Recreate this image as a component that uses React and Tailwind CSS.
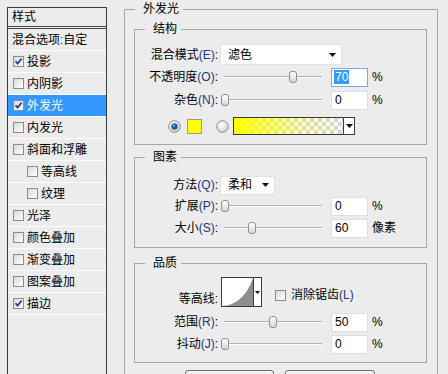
import React from "react";

const KEY = "text-[#24357f]";

const Check = ({ checked }) => (
  <span className="w-[11px] h-[11px] shrink-0 border border-[#8c8c8c] bg-[linear-gradient(135deg,#d9d9d9,#ffffff)] flex items-center justify-center">
    {checked && (
      <svg width="9" height="9" viewBox="0 0 9 9">
        <path d="M1.5 4.2 L3.6 6.6 L7.6 1.6" stroke="#2b3f9e" strokeWidth="1.7" fill="none" />
      </svg>
    )}
  </span>
);

const Radio = ({ on }) => (
  <svg width="13" height="13" viewBox="0 0 13 13" className="shrink-0">
    <defs>
      <radialGradient id={on ? "rOn" : "rOff"} cx="40%" cy="35%" r="70%">
        <stop offset="0%" stopColor="#ffffff" />
        <stop offset="100%" stopColor="#cfcfcf" />
      </radialGradient>
    </defs>
    <circle cx="6.5" cy="6.5" r="5.8" fill={`url(#${on ? "rOn" : "rOff"})`} stroke="#8a8a8a" />
    {on && <circle cx="6.5" cy="6.5" r="3.2" fill="#1f5d9c" />}
    {on && <circle cx="5.8" cy="5.6" r="1.1" fill="#8fc4ef" />}
  </svg>
);

const Arrow = () => (
  <svg width="7" height="4" viewBox="0 0 7 4">
    <path d="M0 0 H7 L3.5 4 Z" fill="#111" />
  </svg>
);

const Slider = ({ pos }) => (
  <div className="relative w-[102px] h-[12px] shrink-0">
    <div className="absolute left-[4px] right-0 top-[5px] h-[1px] bg-[#b4b4b4]" />
    <div className="absolute left-[4px] right-0 top-[6px] h-[1px] bg-white" />
    <div
      className="absolute top-0 w-[8px] h-[12px] rounded-[3px] border border-[#8f8f8f] bg-[linear-gradient(#ffffff,#d6d6d6)]"
      style={{ left: pos }}
    />
  </div>
);

const Label = ({ text, k, className = "" }) => (
  <div className={`w-[83px] shrink-0 text-right whitespace-nowrap ${className}`}>
    {text}
    <span className={KEY}>({k})</span>:
  </div>
);

const NumBox = ({ value, focus }) => (
  <div
    className={`ml-[9px] w-[37px] h-[19px] bg-white border flex items-center pl-[2px] ${
      focus ? "border-[#86a8d6]" : "border-[#dedede]"
    }`}
  >
    {focus ? (
      <span className="bg-[#3399ff] text-white leading-[14px] px-[1px]">{value}</span>
    ) : (
      <span className="px-[1px]">{value}</span>
    )}
  </div>
);

const SliderRow = ({ text, k, pos, value, unit = "%", focus, h = "h-[22px]" }) => (
  <div className={`flex items-center ${h}`}>
    <Label text={text} k={k} />
    <div className="ml-[2px] flex items-center">
      <Slider pos={pos} />
      <NumBox value={value} focus={focus} />
      <span className="ml-[4px]">{unit}</span>
    </div>
  </div>
);

const Group = ({ title, indent, children, className = "" }) => (
  <fieldset className={`border border-[#a6a6a6] ${className}`}>
    <legend className={`leading-[16px] pl-[8px] pr-[4px] ${indent}`}>{title}</legend>
    {children}
  </fieldset>
);

const styles = [
  { t: "投影", c: true },
  { t: "内阴影" },
  { t: "外发光", c: true, sel: true },
  { t: "内发光" },
  { t: "斜面和浮雕" },
  { t: "等高线", sub: true },
  { t: "纹理", sub: true },
  { t: "光泽" },
  { t: "颜色叠加" },
  { t: "渐变叠加" },
  { t: "图案叠加" },
  { t: "描边", c: true },
];

export default function App() {
  return (
    <div className="w-[448px] h-[374px] overflow-hidden bg-[#ececec] flex items-start text-[12px] text-black font-['Liberation_Sans','Noto_Sans_CJK_SC',sans-serif]">
      {/* left list */}
      <div className="ml-[7px] mt-[7px] w-[100px] h-[400px] shrink-0 border border-[#3c3c3c] flex flex-col">
        <div className="h-[21px] border-b-[3px] border-double border-[#4a4a4a] flex items-center pl-[4px] leading-none">
          样式
        </div>
        <div className="h-[22px] border-b border-white flex items-center pl-[4px] whitespace-nowrap">
          混合选项<span className={KEY}>:</span>自定
        </div>
        {styles.map((s) => (
          <div
            key={s.t}
            className={`h-[22px] border-b border-white flex items-center gap-[3px] whitespace-nowrap ${
              s.sub ? "pl-[19px]" : "pl-[5px]"
            } ${s.sel ? "bg-[#3399ff] text-white" : ""}`}
          >
            <Check checked={s.c} />
            <span>{s.t}</span>
          </div>
        ))}
      </div>

      {/* right panel */}
      <fieldset className="ml-[17px] mt-[1px] w-[314px] shrink-0 border border-[#a6a6a6] pl-[9px] pr-[10px] pb-[20px]">
        <legend className="leading-[16px] ml-[1px] pl-[8px] pr-[4px]">外发光</legend>

        <Group title="结构" indent="ml-[10px]" className="mt-[4px] pt-[7px] pb-[3px]">
          <div className="flex items-center h-[21px]">
            <Label text="混合模式" k="E" />
            <div className="ml-[2px] w-[122px] h-[21px] bg-white border border-[#e2e2e2] flex items-center justify-between pl-[7px] pr-[5px]">
              <span>滤色</span>
              <Arrow />
            </div>
          </div>
          <SliderRow text="不透明度" k="O" pos={69} value="70" focus h="h-[24px]" />
          <SliderRow text="杂色" k="N" pos={1} value="0" />
          <div className="flex items-center h-[30px] pl-[33px]">
            <Radio on />
            <div className="ml-[6px] w-[15px] h-[15px] bg-[#ffff00] border border-[#9a9a9a]" />
            <div className="ml-[14px]">
              <Radio />
            </div>
            <div className="ml-[4px] w-[122px] h-[18px] border border-[#3a3a3a] flex">
              <div className="flex-1 bg-[linear-gradient(to_right,#ffff00,rgba(255,255,0,0.25)_60%,rgba(255,255,0,0)),repeating-conic-gradient(#d6d6d6_0_25%,#ffffff_0_50%)] bg-[length:100%_100%,8px_8px]" />
              <div className="w-[11px] border-l border-[#3a3a3a] bg-white flex items-center justify-center">
                <Arrow />
              </div>
            </div>
          </div>
        </Group>

        <Group title="图素" indent="ml-[10px]" className="mt-[4px] pt-[10px] pb-[8px]">
          <div className="flex items-center h-[20px]">
            <Label text="方法" k="Q" />
            <div className="ml-[2px] w-[55px] h-[19px] bg-white border border-[#e2e2e2] flex items-center justify-between pl-[7px] pr-[5px]">
              <span>柔和</span>
              <Arrow />
            </div>
          </div>
          <SliderRow text="扩展" k="P" pos={1} value="0" />
          <SliderRow text="大小" k="S" pos={28} value="60" unit="像素" />
        </Group>

        <Group title="品质" indent="ml-[10px]" className="mt-[7px] pt-[6px] pb-[7px]">
          <div className="flex items-stretch h-[30px]">
            <div className="w-[83px] shrink-0 text-right self-end leading-[16px]">等高线:</div>
            <div className="ml-[3px] w-[41px] h-[30px] border border-[#3a3a3a] flex bg-white">
              <svg width="31" height="28" viewBox="0 0 31 28" className="shrink-0">
                <path d="M1 28 Q22 26 31 0 L31 28 Z" fill="#8e8e8e" />
              </svg>
              <div className="flex-1 border-l border-[#3a3a3a] flex items-center justify-center">
                <svg width="5" height="3" viewBox="0 0 5 3">
                  <path d="M0 0 H5 L2.5 3 Z" fill="#111" />
                </svg>
              </div>
            </div>
            <div className="ml-[13px] flex items-center gap-[5px] self-start mt-[9px] whitespace-nowrap">
              <Check />
              <span>
                消除锯齿<span className={KEY}>(L)</span>
              </span>
            </div>
          </div>
          <div className="mt-[4px]">
            <SliderRow text="范围" k="R" pos={49} value="50" />
            <SliderRow text="抖动" k="J" pos={1} value="0" />
          </div>
        </Group>

        <div className="mt-[7px] ml-[51px] flex gap-[11px]">
          <div className="w-[89px] h-[23px] rounded-[3px] border border-[#707070] bg-[linear-gradient(#f2f2f2,#dcdcdc)]" />
          <div className="w-[90px] h-[23px] rounded-[3px] border border-[#707070] bg-[linear-gradient(#f2f2f2,#dcdcdc)]" />
        </div>
      </fieldset>
    </div>
  );
}
